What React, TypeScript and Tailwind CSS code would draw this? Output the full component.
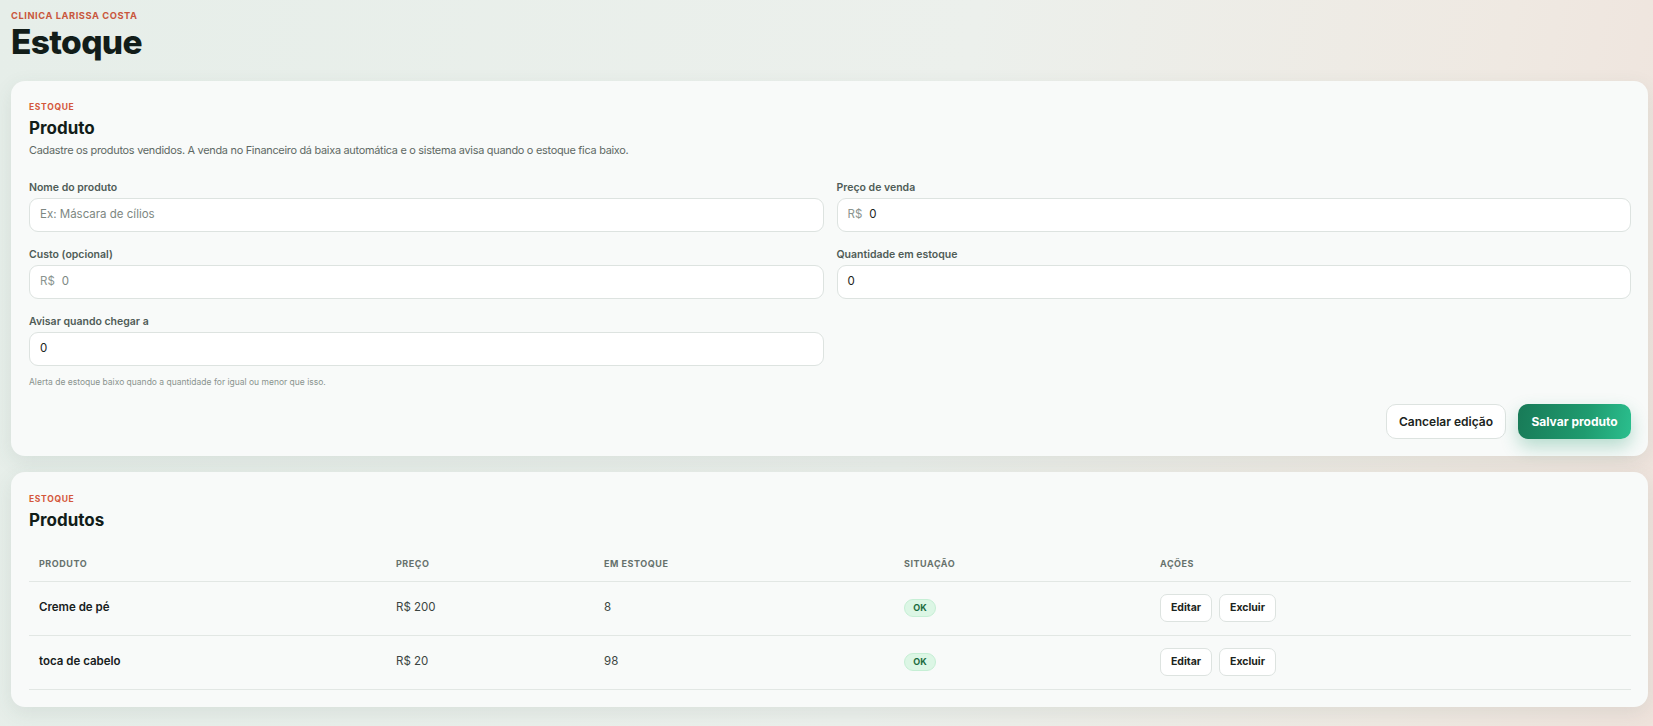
import React from "react";

const font = { fontFamily: '"Inter", "Noto Sans", sans-serif' };

function Field({ label, prefix, value, placeholder }: { label: string; prefix?: string; value?: string; placeholder?: string }) {
  return (
    <div className="flex flex-col">
      <label className="text-[10.5px] font-semibold text-[#4f5c57] leading-[13px] mb-[4px]">{label}</label>
      <div className="h-[34px] rounded-[9px] border border-[#dde3e0] bg-white flex items-center px-[10px] text-[11.5px]">
        {prefix && <span className="text-[#8a948f] mr-[7px]">{prefix}</span>}
        {value !== undefined ? (
          <span className="text-[#1b2420]">{value}</span>
        ) : (
          <span className="text-[#7d8782]">{placeholder}</span>
        )}
      </div>
    </div>
  );
}

const rows = [
  { name: "Creme de pé", price: "R$ 200", qty: "8" },
  { name: "toca de cabelo", price: "R$ 20", qty: "98" },
];

const th = "text-left pl-[10px] pb-[10px] text-[9px] font-bold tracking-[0.06em] text-[#66716c]";

export default function App() {
  return (
    <div
      style={font}
      className="min-h-[726px] w-full bg-[linear-gradient(100deg,#e6eee9_0%,#ecf0ec_55%,#efe9e2_85%,#efe3dc_100%)] pl-[11px] pr-[5px] pt-[10px] pb-[19px] text-[#16201c]"
    >
      <div>
        <div className="text-[9.3px] font-bold tracking-[0.06em] text-[#c9573d] leading-[12px]">CLINICA LARISSA COSTA</div>
        <h1 className="text-[33.5px] font-extrabold tracking-[-0.02em] leading-[38px] text-[#121d19] mt-[1px]">Estoque</h1>
      </div>

      <div className="mt-[20px] rounded-[14px] bg-[#f8faf9] shadow-[0_6px_20px_rgba(60,90,75,0.10)] pl-[18px] pr-[17px] pt-[20px] pb-[17px]">
        <div className="text-[8.5px] font-bold tracking-[0.08em] text-[#d4573b] leading-[12px]">ESTOQUE</div>
        <h2 className="text-[17px] font-bold leading-[22px] text-[#121d19] mt-[4px]">Produto</h2>
        <p className="text-[10.9px] tracking-[-0.025em] text-[#5e6964] leading-[14px] mt-[4px]">
          Cadastre os produtos vendidos. A venda no Financeiro dá baixa automática e o sistema avisa quando o estoque fica baixo.
        </p>

        <div className="grid grid-cols-2 gap-x-[13px] gap-y-[16px] mt-[24px]">
          <Field label="Nome do produto" placeholder="Ex: Máscara de cílios" />
          <Field label="Preço de venda" prefix="R$" value="0" />
          <Field label="Custo (opcional)" prefix="R$" placeholder="0" />
          <Field label="Quantidade em estoque" value="0" />
          <div className="flex flex-col">
            <Field label="Avisar quando chegar a" value="0" />
            <p className="text-[8.5px] text-[#8a948f] mt-[11px] leading-[10px]">
              Alerta de estoque baixo quando a quantidade for igual ou menor que isso.
            </p>
          </div>
        </div>

        <div className="flex justify-end gap-[12px] mt-[17px]">
          <button className="h-[35px] w-[120px] rounded-[10px] border border-[#dde3e0] bg-white text-[12px] font-semibold text-[#1b2420]">
            Cancelar edição
          </button>
          <button className="h-[35px] w-[113px] rounded-[10px] bg-[linear-gradient(100deg,#187a57_0%,#1f9b6f_60%,#2bbf8e_100%)] text-[12px] font-bold text-white shadow-[0_8px_18px_rgba(30,150,105,0.30)]">
            Salvar produto
          </button>
        </div>
      </div>

      <div className="mt-[16px] rounded-[14px] bg-[#f8faf9] shadow-[0_6px_20px_rgba(60,90,75,0.10)] pl-[18px] pr-[17px] pt-[21px] pb-[17px]">
        <div className="text-[8.5px] font-bold tracking-[0.08em] text-[#d4573b] leading-[12px]">ESTOQUE</div>
        <h2 className="text-[17px] font-bold leading-[22px] text-[#121d19] mt-[4px]">Produtos</h2>

        <table className="w-full mt-[26px] border-collapse">
          <thead>
            <tr className="border-b border-[#e2e7e4]">
              <th className={`w-[357px] ${th}`}>PRODUTO</th>
              <th className={`w-[208px] ${th}`}>PREÇO</th>
              <th className={`w-[300px] ${th}`}>EM ESTOQUE</th>
              <th className={`w-[256px] ${th}`}>SITUAÇÃO</th>
              <th className={th}>AÇÕES</th>
            </tr>
          </thead>
          <tbody>
            {rows.map((r) => (
              <tr key={r.name} className="border-b border-[#e2e7e4] h-[54px]">
                <td className="pl-[10px] align-middle text-[11.5px] font-semibold text-[#16201c]">{r.name}</td>
                <td className="pl-[10px] align-middle text-[11.5px] text-[#3b4541]">{r.price}</td>
                <td className="pl-[10px] align-middle text-[11.5px] text-[#3b4541]">{r.qty}</td>
                <td className="pl-[10px] align-middle">
                  <div className="flex">
                    <span className="flex h-[18px] w-[32px] items-center justify-center rounded-full border border-[#c6efd5] bg-[#dcf6e5] text-[9px] font-bold text-[#1c6b41]">
                      OK
                    </span>
                  </div>
                </td>
                <td className="pl-[10px] align-middle">
                  <div className="flex gap-[7px]">
                    <button className="h-[28px] w-[52px] rounded-[7px] border border-[#dde3e0] bg-white text-[10.5px] font-bold text-[#1b2420]">Editar</button>
                    <button className="h-[28px] w-[57px] rounded-[7px] border border-[#dde3e0] bg-white text-[10.5px] font-bold text-[#1b2420]">Excluir</button>
                  </div>
                </td>
              </tr>
            ))}
          </tbody>
        </table>
      </div>
    </div>
  );
}
